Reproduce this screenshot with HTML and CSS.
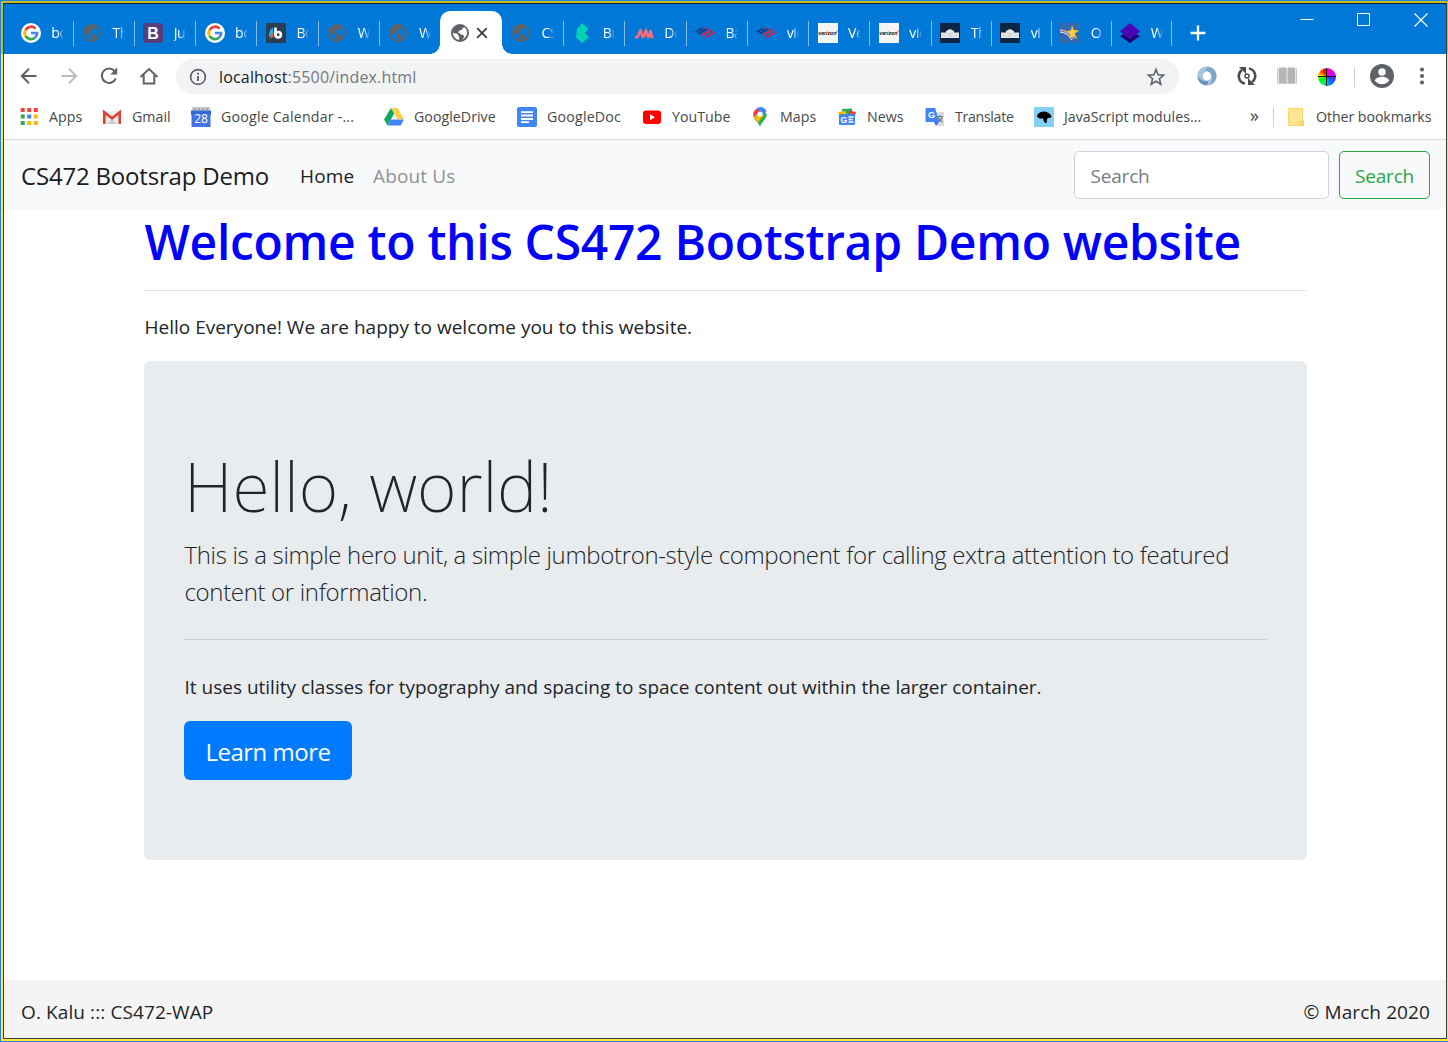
FILE: index.html
```html
<!DOCTYPE html>
<html lang="en">
<head>
<meta charset="utf-8">
<title>CS472 Bootsrap Demo</title>
<link rel="stylesheet" href="styles.css">
</head>
<body>
<svg class="defs" width="0" height="0" aria-hidden="true">
  <symbol id="globe" viewBox="0 0 18 18"><path fill-rule="evenodd" d="M9 0a9 9 0 1 0 0 18A9 9 0 0 0 9 0zM2 8.6c.8.9 2 1 3.300 1 1.200 0 1.700.6 1.700 1.500 0 1 1.200.8 1.200 2l-.1 2.900A7.100 7.100 0 0 1 2 8.600zm14-1.300c.5 3.700-1.500 6.800-4.600 8.100.2-1 1.700-1.400 1.700-2.800 0-1.300-1-1.900-2.400-1.900-1.500 0-1.200-1.800-2.600-1.800-.9 0-1.300-.6-.6-1.300l1.200-1c.9-.8 2.500 0 2.500-1.600 0-1 1.500-.8 1.800-2A7 7 0 0 1 16 7.300z"/></symbol>
  <symbol id="google" viewBox="0 0 20 20"><circle cx="10" cy="10" r="10" fill="#fff"/><g fill="none" stroke-width="2.700"><path d="M14.500 5.600A6.200 6.200 0 0 0 4.600 7" stroke="#ea4335"/><path d="M4.600 7a6.300 6.300 0 0 0 0 6" stroke="#fbbc05"/><path d="M4.600 13a6.200 6.200 0 0 0 9.500 1.600" stroke="#34a853"/><path d="M14.100 14.600A6 6 0 0 0 16.100 10H10" stroke="#4285f4"/></g></symbol>
  <symbol id="flag" viewBox="0 0 20 12"><g fill="none" stroke-width="1.900"><path d="M.5 5 8 1.200M3 6.800l9-5" stroke="#123a8c"/><path d="M7 1.500c4-1.500 6 1 8 .5" stroke="#8a3a6c" stroke-width="1.300"/><path d="M7 8.700C11 4 13 6 17.500 3.200M10.500 10.800c4-4 5-2.800 9-5.500" stroke="#d8203f"/></g></symbol>
  <symbol id="verizon" viewBox="0 0 20 20"><path fill="#f5f5f5" d="M0 0h20v20H0z"/><text x=".3" y="12.300" font-family="Liberation Sans" font-size="5.600" font-weight="bold" font-style="italic" textLength="18" lengthAdjust="spacingAndGlyphs" fill="#111">verizon</text><path d="M18 10l1.500-2.500" stroke="#e33" stroke-width=".9"/></symbol>
  <symbol id="house" viewBox="0 0 20 20"><path fill="#0b2545" d="M0 0h20v20H0z"/><path fill="#e8e8e8" d="M1 9.500h5V8l4-2 4 2v1.500h5V15H1z"/><path d="M3 11v3M5 11v3M8 9.500V14M10 9.500V14M12 9.500V14M15 11v3M17 11v3" stroke="#a9b1b9" stroke-width=".5"/></symbol>
</svg>
<div class="frame"><div class="frame-inner"><div class="window">
  <header class="tabstrip">
    <div class="tabs">
      <div class="tab"><svg class="fav"><use href="#google"/></svg><span>bo</span></div>
      <div class="tab"><svg class="fav globe"><use href="#globe"/></svg><span>Th</span></div>
      <div class="tab"><svg class="fav" viewBox="0 0 20 20"><rect width="20" height="20" rx="3.500" fill="#563d7c"/><text x="10" y="15.600" text-anchor="middle" font-family="Liberation Sans" font-weight="bold" font-size="16" fill="#fff">B</text></svg><span>Ju</span></div>
      <div class="tab"><svg class="fav"><use href="#google"/></svg><span>bo</span></div>
      <div class="tab"><svg class="fav" viewBox="0 0 20 20"><rect width="20" height="20" rx="1" fill="#2b3e50"/><path d="M7 4.500v6l-4 4c-.5-4.500 1-8 4-10z" fill="#19b5fe"/><path d="M7.500 8.500V14l-4 1.500z" fill="#f0642a"/><path d="M9.500 4.500v7.500" stroke="#fff" stroke-width="2.600"/><circle cx="12.200" cy="11.700" r="2.700" fill="none" stroke="#fff" stroke-width="2.600"/></svg><span>Bo</span></div>
      <div class="tab"><svg class="fav globe"><use href="#globe"/></svg><span>W</span></div>
      <div class="tab no-sep"><svg class="fav globe"><use href="#globe"/></svg><span>W</span></div>
      <div class="tab active"><svg class="fav globe"><use href="#globe"/></svg><svg class="close" viewBox="0 0 12 12"><path d="M1.200 1.200l9.600 9.600M10.800 1.200l-9.600 9.600" stroke="#3c4043" stroke-width="1.900"/></svg></div>
      <div class="tab"><svg class="fav globe"><use href="#globe"/></svg><span>CS</span></div>
      <div class="tab"><svg class="fav" viewBox="0 0 20 20"><path fill="#00d1b2" d="M10 0l6.500 6-3.700 4 4 4.500L10 20l-6-5.500L5 6z"/></svg><span>Bu</span></div>
      <div class="tab"><svg class="fav" viewBox="0 0 20 20"><path d="M1 14.200h2.500L6.500 7l2 7h1l2.500-7 2 7h1l1.500-6 1.500 6.200h1.500" fill="none" stroke="#fd6c75" stroke-width="2.500" stroke-linejoin="round"/></svg><span>Do</span></div>
      <div class="tab"><svg class="fav flag"><use href="#flag"/></svg><span>Ba</span></div>
      <div class="tab"><svg class="fav flag"><use href="#flag"/></svg><span>vie</span></div>
      <div class="tab"><svg class="fav"><use href="#verizon"/></svg><span>Ve</span></div>
      <div class="tab"><svg class="fav"><use href="#verizon"/></svg><span>vie</span></div>
      <div class="tab narrow"><svg class="fav"><use href="#house"/></svg><span>Th</span></div>
      <div class="tab narrow"><svg class="fav"><use href="#house"/></svg><span>vi</span></div>
      <div class="tab narrow"><svg class="fav" viewBox="0 0 20 20"><path fill="#3668b0" d="M0 0h20v20H0z"/><path d="M0 7c6 .5 10 3 14 9" fill="none" stroke="#e9a0a0" stroke-width="1.500"/><path d="M0 9c5 .5 9 3 12 8" fill="none" stroke="#fff" stroke-width="1"/><path fill="#fbd03b" d="M12 2l1.700 5 5.300.5-4.500 3.200 3 5.300-4.500-2.800-4 2.300 1.500-4.500L7 8l4-.8z"/></svg><span>O</span></div>
      <div class="tab narrow"><svg class="fav" viewBox="0 0 20 20"><path fill="#1b0073" d="M0 13l10-5 10 5-10 7z"/><path fill="#4a05b5" d="M10 0l10 8.500L10 16 0 8.500z"/></svg><span>W</span></div>
    </div>
    <svg class="new-tab" viewBox="0 0 16 16"><path d="M8 .5v15M.5 8h15" stroke="#fff" stroke-width="2.300"/></svg>
    <div class="controls">
      <svg viewBox="0 0 14 14"><path d="M.5 6.500h13" stroke="#fff"/></svg>
      <svg viewBox="0 0 14 14"><path d="M.5.5h12v12H.5z" fill="none" stroke="#fff"/></svg>
      <svg viewBox="0 0 14 14"><path d="M.5.5l13 13M13.500.5l-13 13" stroke="#fff" stroke-width="1.200"/></svg>
    </div>
  </header>

  <div class="toolbar">
    <svg class="tool" viewBox="0 0 20 20"><path d="M17.500 10H3.500M10 2.800L2.800 10l7.200 7.200" fill="none" stroke="#5f6368" stroke-width="2"/></svg>
    <svg class="tool" viewBox="0 0 20 20"><path d="M2.500 10h14M10 2.800l7.200 7.200-7.200 7.200" fill="none" stroke="#babcbe" stroke-width="2"/></svg>
    <svg class="tool" viewBox="0 0 20 20"><path d="M16.800 12.300A7.200 7.200 0 1 1 15.500 5" fill="none" stroke="#5f6368" stroke-width="2"/><path d="M18.200 1.500V8.500h-7z" fill="#5f6368"/></svg>
    <svg class="tool" viewBox="0 0 20 20"><path d="M1.500 11L10 3l8.500 8M4.700 9v8.500h10.600V9" fill="none" stroke="#5f6368" stroke-width="2"/></svg>
    <div class="omnibox">
      <svg class="info" viewBox="0 0 18 18"><circle cx="9" cy="9" r="7.400" fill="none" stroke="#5f6368" stroke-width="1.700"/><path d="M9 8v5M9 4.700v2" stroke="#5f6368" stroke-width="1.900"/></svg>
      <span class="url">localhost<i>:5500/index.html</i></span>
      <svg class="star" viewBox="0 0 20 20"><path d="M10 2.500l2.100 5.200 5.600.4-4.300 3.600 1.400 5.500L10 14.200l-4.800 3 1.400-5.500-4.300-3.600 5.600-.4z" fill="none" stroke="#5f6368" stroke-width="1.600"/></svg>
    </div>
    <svg class="tool ext" viewBox="0 0 20 20"><circle cx="10" cy="10" r="7" fill="none" stroke="#aac4de" stroke-width="5.500"/><path d="M11 1c5 .5 8.500 4 8.300 9-.2 4-3 7.500-7.300 9 3-3 4-6 2.500-9.500-1-3-3-4-6-4.500C8.500 3 9.500 1.800 11 1z" fill="#7ea5cb"/><path d="M9 19c-5-.5-8-4-8.300-8.500C3 14 6 15.500 11 15.200 11.500 17 10.500 18.500 9 19z" fill="#5f8fbd"/><ellipse cx="10" cy="10" rx="3.200" ry="4.500" fill="#fff"/></svg>
    <svg class="tool ext" viewBox="0 0 20 20"><g fill="none" stroke="#4d4d4d" stroke-width="2.500"><path d="M8 17.600C1 16 0 8 4.800 4M12 2.400c7 1.600 8 9.600 3.200 13.600"/><circle cx="10" cy="10" r="2" stroke-width="1.500"/></g><path d="M2 1h7v7zM18 19h-7v-7z" fill="#4d4d4d"/></svg>
    <svg class="tool ext" viewBox="0 0 20 20"><path d="M0 2.500h20v15H0z" fill="#c6c6c6"/><path d="M2 1.500h7.300v16H2zM10.700 1.500H18v16h-7.300z" fill="#b5b5b5"/><path d="M10 1.500v16M1.500 2v15M18.500 2v15" stroke="#eee" stroke-width=".8"/></svg>
    <div class="wheel"></div>
    <div class="rule"></div>
    <svg class="avatar" viewBox="0 0 24 24"><circle cx="12" cy="12" r="12" fill="#5f6368"/><circle cx="12" cy="8" r="3.700" fill="#fff"/><path d="M4.800 16.500c1.700-5 12.700-5 14.400 0-3.400 5-11 5-14.400 0z" fill="#fff"/></svg>
    <svg class="menu" viewBox="0 0 6 18"><g fill="#5f6368"><circle cx="3" cy="2.500" r="2.100"/><circle cx="3" cy="9" r="2.100"/><circle cx="3" cy="15.500" r="2.100"/></g></svg>
  </div>

  <div class="bookmarks">
    <div class="bm"><svg viewBox="0 0 20 20"><g transform="translate(1.700 1)"><path fill="#f44336" d="M0 0h4v4H0zM6.500 0h4v4h-4zM13 0h4v4h-4z"/><path fill="#34a853" d="M0 6.500h4v4H0zM0 13h4v4H0z"/><path fill="#4285f4" d="M6.500 6.500h4v4h-4z"/><path fill="#fbbc05" d="M13 6.500h4v4h-4zM6.500 13h4v4h-4zM13 13h4v4h-4z"/></g></svg><span>Apps</span></div>
    <div class="bm"><svg viewBox="0 0 20 20"><path fill="#eee" d="M2 4h16v13H2z"/><path fill="#ccc" d="M5 17l5-5 5 5z"/><path d="M2.300 17V5.200l7.700 6 7.700-6V17" fill="none" stroke="#db4437" stroke-width="2.700"/></svg><span>Gmail</span></div>
    <div class="bm wider"><svg viewBox="0 0 20 20"><path fill="#c8c8c8" d="M1 0h18v4H1z"/><path d="M4 1v2M8 1v2M12 1v2M16 1v2" stroke="#888"/><path fill="#3367d6" d="M0 3.500h20V8H0z"/><path fill="#4074e8" d="M.5 7h19v13H.5z"/><text x="10" y="16" text-anchor="middle" font-family="Open Sans" font-size="12" letter-spacing="0" fill="#fff">28</text></svg><span>Google Calendar -...</span></div>
    <div class="bm"><svg viewBox="0 0 20 20"><path fill="#ffcf48" d="M7 1h6.500L20 12h-6.600z"/><path fill="#11a861" d="M7 1l3.200 5.600L3.500 18.500 0 12.500z"/><path fill="#4285f4" d="M6.700 12.500H20l-3.300 6H3.500z"/></svg><span>GoogleDrive</span></div>
    <div class="bm wider"><svg viewBox="0 0 20 20"><rect width="20" height="20" rx="2" fill="#4285f4"/><path d="M4 5.200h12M4 8.500h12M4 12h12M4 15.200h8" stroke="#fff" stroke-width="1.800"/></svg><span>GoogleDoc</span></div>
    <div class="bm"><svg viewBox="0 0 20 20"><rect x="1" y="3.500" width="18" height="13.500" rx="3" fill="red"/><path fill="#fff" d="M8 7.300v5.900l5-3z"/></svg><span>YouTube</span></div>
    <div class="bm"><svg viewBox="0 0 20 20"><path fill="#34a853" d="M3.500 10c1 4 5 4.500 6.500 10 1.500-6 7-7.500 6.800-13L13 3z"/><path fill="#fbbc05" d="M4 10.500c1 2 2.500 3.300 3.800 5L14 8l-3-3z"/><path fill="#4285f4" d="M6 2.200C9-1.500 15-.2 16.300 4.300L12 9z"/><path fill="#ea4335" d="M6 2C3 4.500 2.600 7.500 3.900 10.300L10 4z"/><circle cx="10" cy="7" r="2.600" fill="#fff"/></svg><span>Maps</span></div>
    <div class="bm"><svg viewBox="0 0 20 20"><path fill="#34a853" d="M5 2l10-.5V7H5z"/><path fill="#ea4335" d="M12 3.500l7 1.500-1 4h-6z"/><path fill="#fbbc05" d="M1 5l7-1 2 4H2z"/><rect x="2" y="7" width="16" height="11" rx="1" fill="#4285f4"/><text x="3.500" y="15.500" font-family="Liberation Sans" font-weight="bold" font-size="8.500" fill="#fff">G</text><path d="M11.500 10h5M11.500 12.500h4M11.500 15h5" stroke="#fff" stroke-width="1.300"/></svg><span>News</span></div>
    <div class="bm tighter"><svg viewBox="0 0 20 20"><path fill="#dcdcdc" d="M8 5h11v14H12z"/><path d="M12 9.500h6M15 8v1.500M13 10c1 3 2.500 4 4.500 5M17 10c-.5 2.500-2 4-4 5" stroke="#607d8b" fill="none" stroke-width="1.200"/><path fill="#3b78e7" d="M9 15h5l-3 4z"/><path fill="#4285f4" d="M1.500 1h8.700l4 14H1.500Q.5 15 .5 14V2q0-1 1-1z"/><text x="3" y="11" font-family="Liberation Sans" font-weight="bold" font-size="9" fill="#fff">G</text></svg><span>Translate</span></div>
    <div class="bm"><svg viewBox="0 0 20 20"><path fill="#83d0f2" d="M0 0h20v20H0z"/><path d="M3 9c0-2 2-3 4-4 4-1.500 8 0 10.500 4-.2 2-2 2-3.500 2-1 .5-1 2-1.200 3 .5 1 .2 2-1.300 2-2-1-2-3-2.500-4.700C7 12 4 12 3 9z"/></svg><span>JavaScript modules...</span></div>
    <div class="more">»</div>
    <div class="rule"></div>
    <div class="bm other"><svg viewBox="0 0 20 20"><path fill="#fbd968" d="M2 1h15v14h1v4H2z"/><path fill="#ffe694" d="M3 2h13v12l-2 4H3z"/><path d="M14.500 14h3v4h-3z" fill="#ffe694" stroke="#f2c94c"/></svg><span>Other bookmarks</span></div>
  </div>

  <nav class="navbar">
    <a class="brand">CS472 Bootsrap Demo</a>
    <a class="nav-link current">Home</a>
    <a class="nav-link">About Us</a>
    <form class="search"><div class="field">Search</div><div class="search-btn">Search</div></form>
  </nav>

  <main class="container">
    <h1>Welcome to this CS472 Bootstrap Demo website</h1>
    <hr>
    <p>Hello Everyone! We are happy to welcome you to this website.</p>
    <section class="jumbotron">
      <h2 class="display">Hello, world!</h2>
      <p class="lead">This is a simple hero unit, a simple jumbotron-style component for calling extra attention to featured<br>content or information.</p>
      <hr class="wide">
      <p>It uses utility classes for typography and spacing to space content out within the larger container.</p>
      <a class="btn">Learn more</a>
    </section>
  </main>
  <footer class="footer"><span>O. Kalu ::: CS472-WAP</span><span>© March 2020</span></footer>
</div></div></div>
</body>
</html>
```
FILE: styles.css
```css
* { box-sizing: border-box; }
body { margin: 0; font-family: "Open Sans", "Noto Sans", sans-serif; color: #212529; overflow: hidden; }
.defs { position: absolute; }
.frame { height: 1042px; padding: 1px 0 1px 1px; background: #2583d0; }
.frame-inner { height: 1040px; padding: 2px 1px 2px 2px; background: linear-gradient(#bfc02f 53px, #ffe43b 53px); }
.window { height: 1036px; border: 1px solid #3a3d40; border-top-color: #12202c; display: flex; flex-direction: column; background: #fff; }

.tabstrip { height: 50px; flex: none; background: #0078d7; display: flex; }
.tabs { display: flex; padding-left: 7.700px; }
.tab { position: relative; width: 61.300px; flex: none; padding: 19px 0 0 9px; display: flex; align-items: flex-start; }
.tab.narrow { width: 60px; }
.tab::after { content: ""; position: absolute; right: -.6px; top: 17px; width: 1px; height: 25px; background: #84bdea; }
.tab.no-sep::after { display: none; }
.fav { width: 20px; height: 20px; flex: none; }
.fav.globe { width: 18px; height: 18px; margin: 1px; fill: #5f6368; }
.fav.flag { height: 12px; margin-top: 4px; }
.tab span { margin-left: 10.500px; width: 12.500px; height: 20px; overflow: hidden; white-space: nowrap; font-size: 14.200px; line-height: 20px; letter-spacing: -.5px; color: #fff; -webkit-mask-image: linear-gradient(90deg, #000 50%, transparent); mask-image: linear-gradient(90deg, #000 50%, transparent); }
.tab.active { background: #fff; margin: 7px 0 0 -1px; width: 62.300px; border-radius: 10px 10px 0 0; padding: 12px 0 0 10px; }
.tab.active::before, .tab.active::after { content: ""; position: absolute; top: auto; bottom: 0; width: 10px; height: 10px; background: radial-gradient(circle at 0 0, transparent 9.500px, #fff 10px); }
.tab.active::before { left: -10px; }
.tab.active::after { right: -10px; background: radial-gradient(circle at 100% 0, transparent 9.500px, #fff 10px); }
.close { width: 12px; height: 12px; margin: 4px 0 0 6px; }
.new-tab { width: 16px; height: 16px; margin: 21px 0 0 19px; }
.controls { display: flex; gap: 43px; margin: 9px 18px 0 auto; }
.controls svg { width: 14px; height: 14px; }

.toolbar { height: 45px; flex: none; display: flex; align-items: center; padding-left: 14.500px; }
.tool { width: 20px; height: 20px; flex: none; margin-right: 20px; }
.toolbar > .tool, .avatar, .menu { position: relative; top: -.5px; }
.omnibox { width: 1003px; height: 35px; margin-left: -2.500px; border-radius: 18px; background: #f1f3f4; display: flex; align-items: center; padding: 0 13px; }
.info { width: 18px; height: 18px; }
.url { margin-left: 12px; font-size: 16px; letter-spacing: .17px; color: #202124; }
.url i { font-style: normal; color: #74787c; }
.star { width: 20px; height: 20px; margin-left: auto; }
.omnibox + .ext { margin-left: 17.500px; }
.wheel { width: 18px; height: 18px; margin: 0 18.500px 0 1px; border-radius: 50%; background: linear-gradient(#111, #111) 50% 0 / 1px 100% no-repeat, linear-gradient(#111, #111) 0 50% / 100% 1px no-repeat, conic-gradient(#f0a, #c0f 70deg, #33f 100deg, #08f 160deg, #0e8 200deg, #0f0 250deg, #fc0 285deg, #f50 310deg, #f00 340deg, #f0a); }
.rule { width: 1px; height: 20px; background: #cfd1d4; }
.avatar { width: 24px; height: 24px; margin-left: 15px; }
.menu { width: 6px; height: 18px; margin-left: 25px; }

.bookmarks { height: 41px; flex: none; display: grid; grid-template-columns: 83px 89px 193px 133px 125px 108px 87px 88px 109px 216px 23px 13px 150px; align-items: center; padding: 0 0 5px 15px; border-bottom: 1px solid #d9dbde; font-size: 14.200px; letter-spacing: .03px; color: #45484b; }
.bm { display: flex; align-items: center; gap: 10px; white-space: nowrap; }
.bm.wider { letter-spacing: .2px; }
.bm.tighter { letter-spacing: -.32px; }
.bm.other { letter-spacing: -.07px; }
.bm svg { width: 20px; height: 20px; flex: none; }
.more { font-size: 18px; line-height: 18px; padding-bottom: 3px; }

.navbar { height: 70px; flex: none; display: flex; align-items: center; padding: 1px 16px 0 17px; background: #f8f9fa; white-space: nowrap; }
.brand { width: 279px; font-size: 24px; letter-spacing: -.19px; color: #1c1c1c; }
.nav-link { width: 73px; font-size: 19px; letter-spacing: .14px; color: #909192; }
.nav-link.current { color: #202121; }
.search { display: flex; gap: 10px; margin: -1px 0 0 auto; font-size: 19px; letter-spacing: -.19px; }
.field, .search-btn { height: 48px; border: 1px solid #ced4da; border-radius: 5px; display: flex; align-items: center; padding-top: 2px; }
.field { width: 255px; padding-left: 15.500px; background: #fff; color: #747c84; }
.search-btn { width: 91px; justify-content: center; border-color: #28a745; color: #28a745; }

.container { flex: 1; width: 1163px; margin-left: 140px; }
h1, h2, p { margin: 0; white-space: nowrap; }
h1 { height: 60px; padding-left: .5px; font-size: 48px; line-height: 64px; font-weight: 600; letter-spacing: -.3px; color: #00f; }
hr { border: 0; height: 1px; margin: 20px 0; background: #e5e5e5; }
p { height: 30px; padding-left: .5px; font-size: 19px; line-height: 32px; }
.jumbotron { height: 499px; margin-top: 20px; padding: 80px 40px; background: #e9ecef; border-radius: 6px; }
.display { height: 84px; font-family: "Noto Sans", sans-serif; font-size: 68px; line-height: 90px; font-weight: 200; letter-spacing: -.1px; }
.lead { height: 74px; margin-top: 11px; font-size: 24px; line-height: 37px; font-weight: 300; letter-spacing: -.335px; }
.wide { margin: 29px 0 31px; background: #cdd0d3; }
.btn { display: flex; width: 168px; height: 59px; margin-top: 20px; padding-top: 2px; align-items: center; justify-content: center; border-radius: 6px; background: #007bff; color: #fff; font-size: 24px; letter-spacing: -.48px; white-space: nowrap; }
.footer { height: 58px; flex: none; display: flex; justify-content: space-between; align-items: center; padding: 5px 16px 0 17px; background: #f4f4f4; font-size: 19px; letter-spacing: .1px; }
```
